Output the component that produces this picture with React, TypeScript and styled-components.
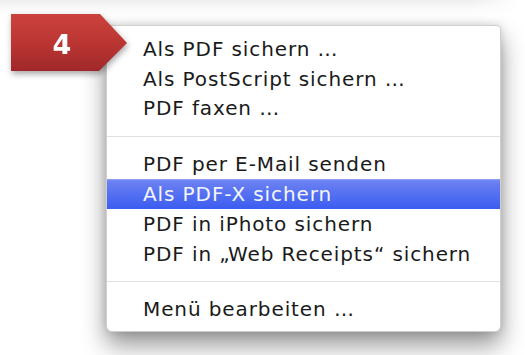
import React from "react";
import styled, { createGlobalStyle } from "styled-components";

const Global = createGlobalStyle`
  html, body { margin: 0; padding: 0; background: #ffffff; }
  body { font-family: "DejaVu Sans", "Liberation Sans", sans-serif; }
`;

const Page = styled.div`
  position: relative;
  width: 525px;
  height: 355px;
  overflow: hidden;
  background: #ffffff;
  padding: 25px 0 0 106px;
  box-sizing: border-box;
`;

const TopShade = styled.div`
  position: absolute;
  left: 0;
  top: 0;
  width: 520px;
  height: 16px;
  background: linear-gradient(to bottom, #eeeeee 0%, #f8f8f8 45%, rgba(255,255,255,0) 100%);
  -webkit-mask-image: linear-gradient(to right, #000 90%, transparent 100%);
  mask-image: linear-gradient(to right, #000 90%, transparent 100%);
`;

const Menu = styled.div`
  position: relative;
  width: 395px;
  height: 307px;
  box-sizing: border-box;
  padding: 8px 0 7px;
  background: #ffffff;
  border: 1px solid #cfcfcf;
  border-radius: 4px 4px 6px 6px;
  box-shadow: 0 13px 24px rgba(0, 0, 0, 0.42), 0 0 8px rgba(0, 0, 0, 0.14);
  display: flex;
  flex-direction: column;
`;

const Item = styled.div<{ $active?: boolean }>`
  height: 30px;
  display: flex;
  align-items: center;
  padding-left: 36px;
  font-size: 20px;
  letter-spacing: 0.9px;
  white-space: nowrap;
  color: ${(p) => (p.$active ? "#f4f6ff" : "#1a1a1a")};
  background: ${(p) =>
    p.$active
      ? "linear-gradient(to bottom, #7a8ff3 0%, #6a80f2 10%, #4f6cf1 60%, #3c5cf0 100%)"
      : "transparent"};
  box-shadow: ${(p) => (p.$active ? "inset 0 1px 0 #8da0f5" : "none")};
`;

const Separator = styled.div`
  height: 26px;
  display: flex;
  align-items: center;
  &::after {
    content: "";
    flex: 1;
    height: 1px;
    background: #e0e0e0;
  }
`;

const Badge = styled.div`
  position: absolute;
  left: 11px;
  top: 14px;
  width: 118px;
  height: 58px;
  filter: drop-shadow(1px 3px 3px rgba(0, 0, 0, 0.35));
`;

const BadgeLabel = styled.span`
  position: absolute;
  left: 0;
  top: 0;
  width: 102px;
  height: 60px;
  display: flex;
  align-items: center;
  justify-content: center;
  font-family: "DejaVu Sans", "Liberation Sans", sans-serif;
  font-weight: bold;
  font-size: 27px;
  color: #ffffff;
`;

type Entry = { label: string; active?: boolean } | "sep";

const entries: Entry[] = [
  { label: "Als PDF sichern …" },
  { label: "Als PostScript sichern …" },
  { label: "PDF faxen …" },
  "sep",
  { label: "PDF per E-Mail senden" },
  { label: "Als PDF-X sichern", active: true },
  { label: "PDF in iPhoto sichern" },
  { label: "PDF in „Web Receipts“ sichern" },
  "sep",
  { label: "Menü bearbeiten …" },
];

export default function App() {
  return (
    <>
      <Global />
      <Page>
        <TopShade />
        <Menu>
          {entries.map((e, i) =>
            e === "sep" ? (
              <Separator key={i} />
            ) : (
              <Item key={i} $active={e.active}>
                {e.label}
              </Item>
            )
          )}
        </Menu>
        <Badge>
          <svg width="118" height="58" viewBox="0 0 118 58">
            <defs>
              <linearGradient id="bg" x1="0" y1="0" x2="0" y2="1">
                <stop offset="0" stopColor="#cc423d" />
                <stop offset="0.5" stopColor="#bb3633" />
                <stop offset="1" stopColor="#a0282a" />
              </linearGradient>
            </defs>
            <polygon points="0,0 89,0 116,29 88,57 0,57" fill="url(#bg)" />
          </svg>
          <BadgeLabel>4</BadgeLabel>
        </Badge>
      </Page>
    </>
  );
}
